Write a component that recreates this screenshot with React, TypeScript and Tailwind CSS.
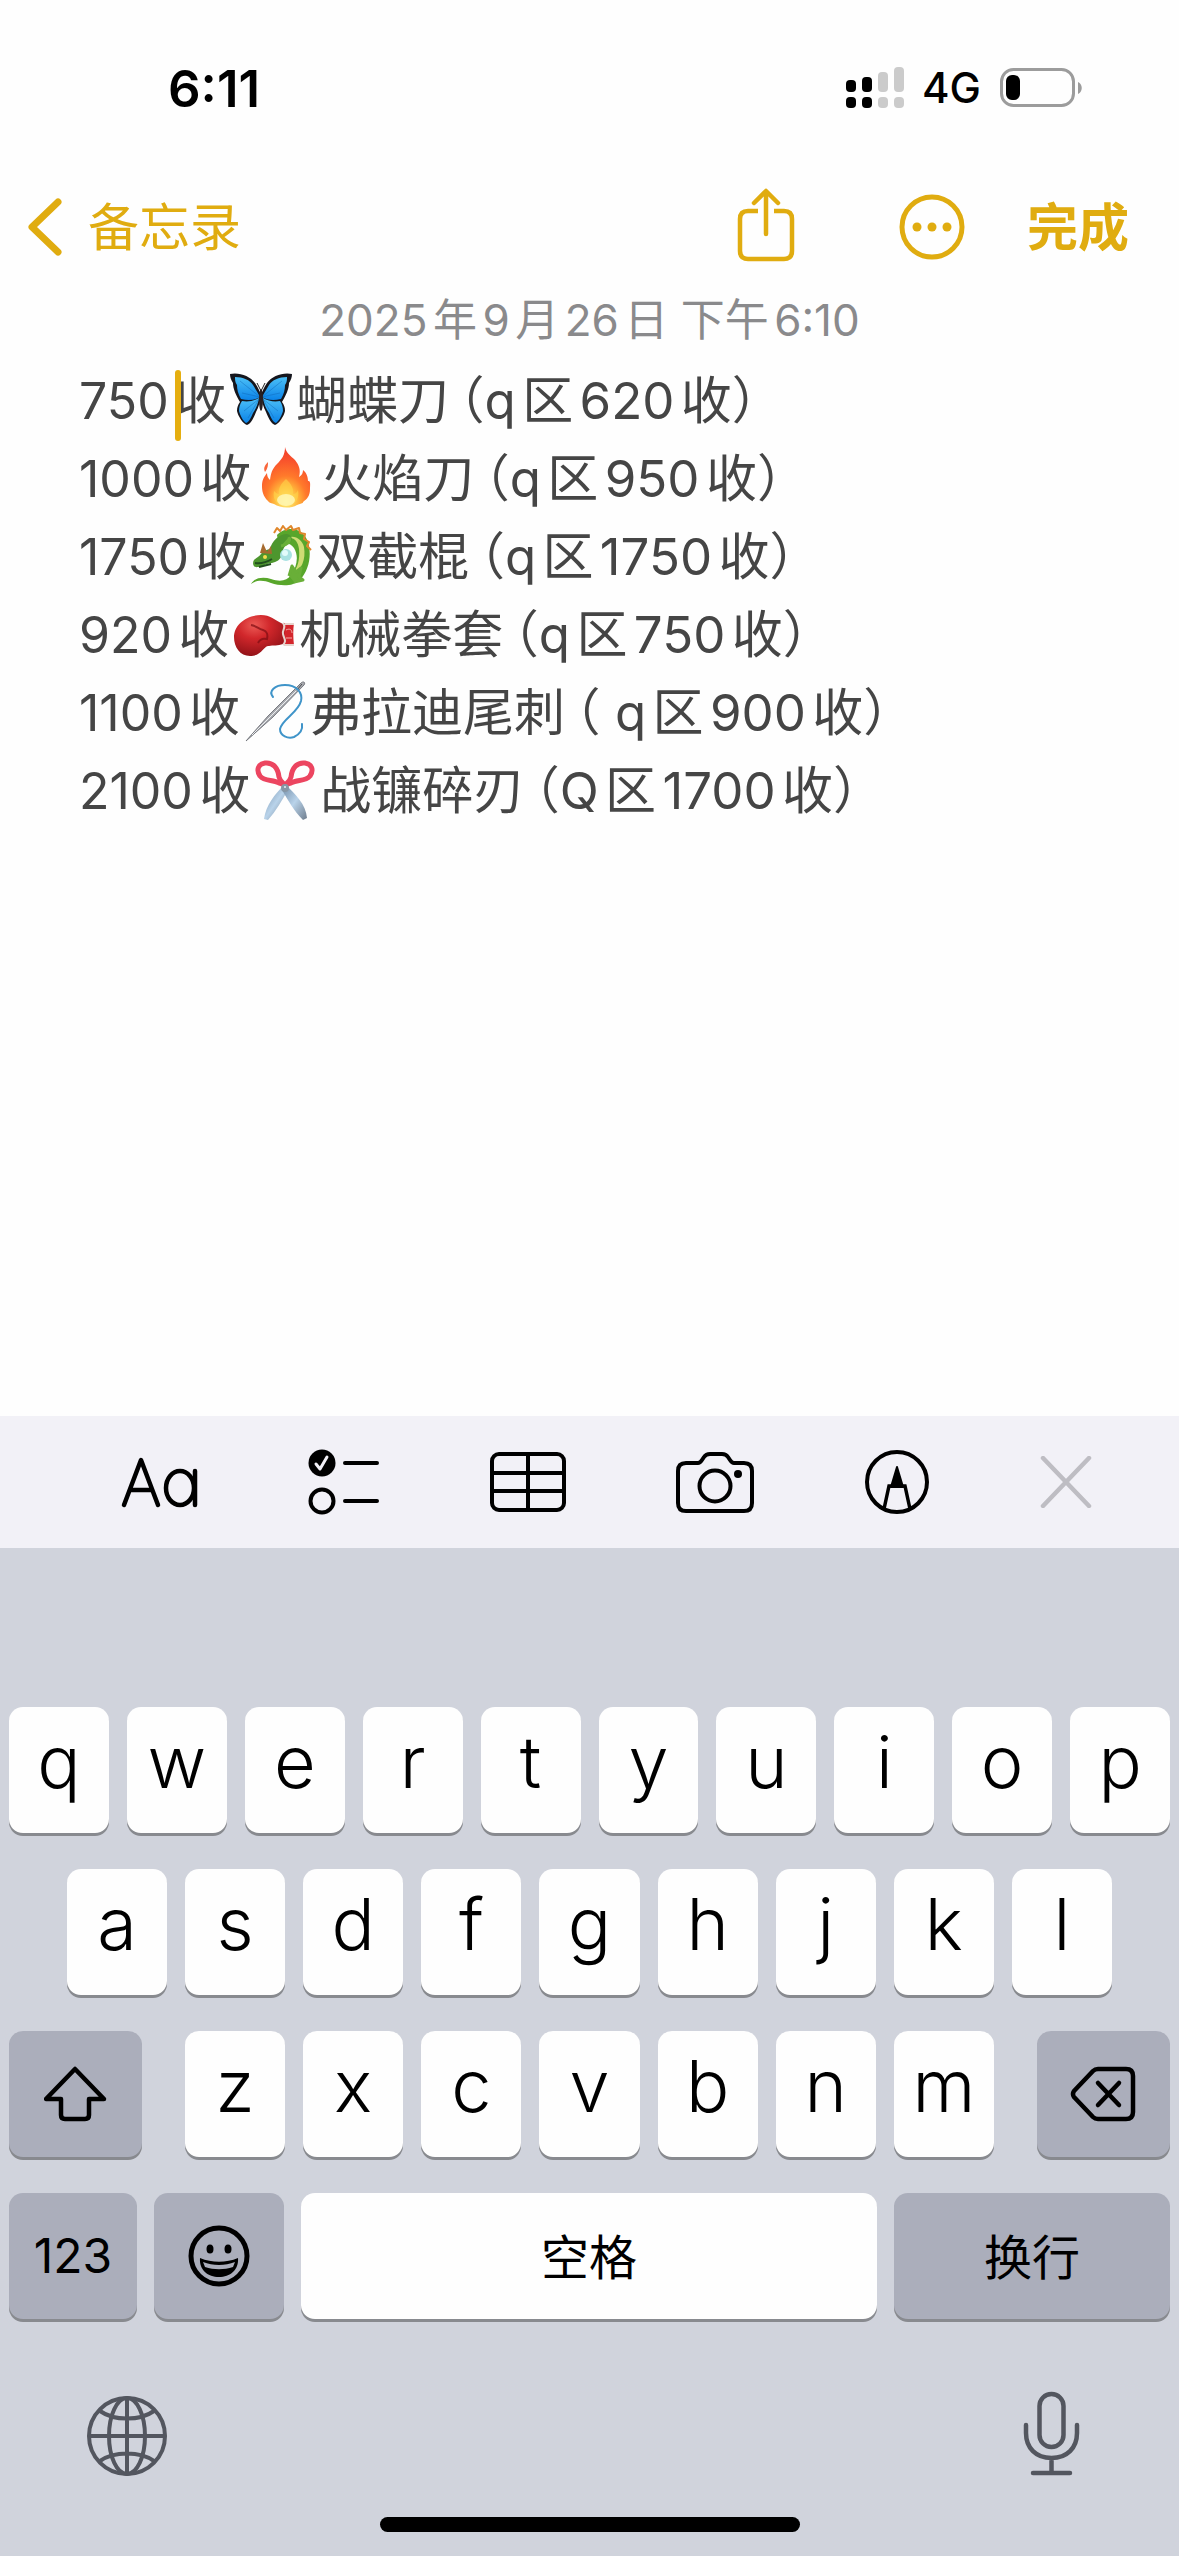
import React from 'react';

const Butterfly = () => (
    <>
        <defs>
            <linearGradient id="wing" x1="0" y1="0" x2="0" y2="1">
                <stop offset="0" stopColor="#4cc0f7" />
                <stop offset="1" stopColor="#0b83e8" />
            </linearGradient>
        </defs>
        {['', 'translate(62 0) scale(-1 1)'].map((t) => (
            <g key={t} transform={t}>
                <path d="M0 5c9-2 20 2 25 9 3 4 5 9 6 12-1 6-2 12-5 17-2 5-5 12-9 13-4-1-9-9-10-14 0-4 1-6 3-9C6 26 3 20 3 14 1 11 0 8 0 5Z" fill="#15161d" />
                <path d="M5 8c8 0 15 3 18 8 3 5 5 8 7 12-5 3-11 4-19 2C8 25 7 20 7 16 5 13 5 11 5 8Z" fill="url(#wing)" />
                <path d="M12 32c6 1 12 0 17-3-1 6-3 11-6 15-2 5-4 9-7 10-3-2-6-8-7-12 0-4 1-7 3-10Z" fill="url(#wing)" />
                <path d="M30 28 10 12M30 28 12 24M29 30 14 42M29 30 18 49" stroke="#0c5fae" strokeWidth="1" opacity="0.4" />
            </g>
        ))}
        <path d="m31 22-4-8m4 8 4-8" stroke="#222" strokeWidth="1" />
        <ellipse cx="31" cy="31" rx="2" ry="11" fill="#2a2122" />
    </>
);

const Fire = () => (
    <>
        <defs>
            <radialGradient id="flame" cx="0.5" cy="0.9" r="0.85">
                <stop offset="0" stopColor="#fff27a" />
                <stop offset="0.3" stopColor="#ffb43a" />
                <stop offset="0.5" stopColor="#ff7a2b" />
                <stop offset="0.8" stopColor="#f9532c" />
                <stop offset="1" stopColor="#f2402a" />
            </radialGradient>
        </defs>
        <path d="M30 0c1 6 6 9 10 13 4 5 6 10 4 17 3-2 4-4 4-7 4 3 5 8 5 11 3-1 2 5 2 8 0 7-3 10-7 13 1 1-4 2-6 3-7 4-17 3-23-1-2-1-5-1-6-3-5-5-6-10-6-15 0-6 2-9 5-13 0 3 1 5 3 7 1-7 2-11 7-16 5-5 8-9 8-17Z" fill="url(#flame)" />
        <path d="M13 15c0 3 0 6-3 10-2-4 0-7 3-10Z" fill="#f9653a" />
        <path d="M31 32c5 5 8 9 7 15 3 0 4-2 5-4 2 10-4 16-12 16S17 53 19 44c2 2 3 3 5 3-1-6 2-10 7-15Z" fill="#ffd84c" opacity="0.55" />
        <ellipse cx="31" cy="53" rx="9" ry="6" fill="#fffbc4" opacity="0.75" />
    </>
);

const Dragon = () => (
    <>
        <path d="M27 10C35 1 53 1 58 17c4 13 1 28-8 38-7 7-20 6-29 3-8-3-14-3-20 1 4-7 13-7 20-5 9 3 16 2 20-4 6-8 8-19 3-27-5-7-12-5-15 0Z" fill="#58a62b" />
        <path d="M34 15c8-5 14 0 15 9 1 10-1 20-8 26 11-4 15-16 13-28-2-9-12-14-20-7Z" fill="#cfdc74" />
        <path d="M24 8 27 3l3 3 3-5 3 4 5-4 2 4 6-2 1 5 5 1-1 5 5 3-2 4 4 4" fill="none" stroke="#e0872b" strokeWidth="2" strokeLinejoin="round" />
        <path d="M20 24c2-8 9-15 17-15 5 1 6 5 3 9-5 2-7 5-8 11-1 6-6 8-10 9-6 0-9 4-14 4-5 1-6-4-4-7 3-3 5-3 7-6 2-3 5-4 9-5Z" fill="#4d962e" />
        <path d="M10 28 13 18l4 9 4-6 1 8" fill="#a66b2f" />
        <path d="M5 38c6 1 12-1 17-4M9 42l12-3" stroke="#214f1d" strokeWidth="2" fill="none" />
        <circle cx="15" cy="32" r="2" fill="#f5dc4c" />
        <path d="M31 21c6-1 10-4 8-9M39 51l3-10 4 6 5-4-2 9 4 3-9 2" stroke="#69af38" strokeWidth="3" fill="#69af38" strokeLinejoin="round" />
        <circle cx="36" cy="30" r="6" fill="#a9e2e2" />
        <circle cx="35" cy="28" r="3" fill="#e2fbfa" />
    </>
);

const Glove = () => (
    <>
        <defs>
            <radialGradient id="glove" cx="0.4" cy="0.25" r="0.8">
                <stop offset="0" stopColor="#ec5a55" />
                <stop offset="0.4" stopColor="#d1272b" />
                <stop offset="1" stopColor="#8c1016" />
            </radialGradient>
        </defs>
        <path d="M51 20h10c-1 7-1 14 0 22H50Z" fill="#d4262c" />
        <path d="M1 34c0-12 12-22 27-22 9 0 14 5 22 9 2 6 2 14 0 20-5 2-10 1-14 2-5-1-7 10-19 10C7 53 1 44 1 34Z" fill="url(#glove)" />
        <path d="M18 22c6 1 7 4 12 5 4 1 5 5 4 9-4-1-7 0-9 4" stroke="#7c0d12" strokeWidth="2" fill="none" opacity="0.7" />
        <path d="M50 20c4 4-1 6 0 11s4 7 0 11M52 21h9M51 42h10" stroke="#e6d3cd" strokeWidth="2" fill="none" />
        <path d="M53 27c4-2 6 0 6 3M53 35h6" stroke="#f5aaa6" strokeWidth="1" fill="none" />
    </>
);

const Needle = () => (
    <>
        <path d="m2 60 22-25L57 2c2-2 5-1 3 2L29 36Z" fill="#a9abb0" stroke="#77797f" strokeWidth="1" />
        <path d="m8 54 44-44" stroke="#eceef0" strokeWidth="1" />
        <path d="m53 9 5-6" stroke="#4a4b50" strokeWidth="1" />
        <path d="M29 16c-5-6 2-12 12-12 11 0 18 7 16 16-3 12-19 18-21 28 0 7 8 10 14 8 6-3 9-7 8-13" fill="none" stroke="#3f94c9" strokeWidth="2" strokeLinecap="round" />
    </>
);

const Scissors = () => (
    <>
        <defs>
            <linearGradient id="blade" x1="0" y1="0" x2="1" y2="1">
                <stop offset="0" stopColor="#6f8aa5" />
                <stop offset="0.5" stopColor="#b9d3ea" />
                <stop offset="1" stopColor="#6e7c8c" />
            </linearGradient>
        </defs>
        <path d="M30 26c-9 9-18 20-20 34l4 1c8-9 14-20 20-30Z" fill="url(#blade)" />
        <path d="M32 26c9 9 20 19 21 33l-4 2c-9-9-15-20-21-30Z" fill="url(#blade)" />
        <g fill="none" stroke="#ec4560" strokeWidth="5">
            <path d="M31 26c-3-3-5-4-6-8C24 9 19 3 11 4 4 5 2 11 6 17c5 6 13 3 19 7Z" />
            <path d="M31 26c3-3 5-4 6-8 1-9 6-15 14-14 7 1 9 7 5 13-5 6-13 3-19 7Z" />
        </g>
        <circle cx="31" cy="29" r="4" fill="#8797a6" />
        <circle cx="31" cy="28" r="1" fill="#e7eef4" />
    </>
);

const NOTES = [
    { price: '750', Icon: Butterfly, emoji: '🦋', name: '蝴蝶刀', zone: 'q区620收', caret: true },
    { price: '1000', Icon: Fire, emoji: '🔥', name: '火焰刀', zone: 'q区950收' },
    { price: '1750', Icon: Dragon, emoji: '🐉', name: '双截棍', zone: 'q区1750收' },
    { price: '920', Icon: Glove, emoji: '🥊', name: '机械拳套', zone: 'q区750收' },
    { price: '1100', Icon: Needle, emoji: '🪡', name: '弗拉迪尾刺', zone: ' q区900收' },
    { price: '2100', Icon: Scissors, emoji: '✂️', name: '战镰碎刃', zone: 'Q区1700收' },
];

const StatusBar = () => (
    <div className="flex h-[176px] items-center justify-between pl-[168px] pr-24 text-black">
        <span className="text-[51px] font-semibold leading-none">6:11</span>
        <div className="flex items-center gap-[18px]">
            <svg width="58" height="42" viewBox="0 0 58 42" aria-label="信号">
                <g fill="#000">
                    <rect x="0" y="13" width="10" height="12" rx="4" />
                    <rect x="16" y="10" width="10" height="15" rx="4" />
                    <rect x="0" y="30" width="10" height="11" rx="4" />
                    <rect x="16" y="30" width="10" height="11" rx="4" />
                </g>
                <g fill="#cbcbcb">
                    <rect x="32" y="5" width="10" height="20" rx="4" />
                    <rect x="48" y="0" width="10" height="25" rx="4" />
                    <rect x="32" y="30" width="10" height="11" rx="4" />
                    <rect x="48" y="30" width="10" height="11" rx="4" />
                </g>
            </svg>
            <span className="text-[42px] font-medium leading-none">4G</span>
            <svg width="84" height="40" viewBox="0 0 84 40" aria-label="电池">
                <rect x="2.5" y="1.5" width="72" height="36" rx="12" fill="none" stroke="#9c9c9c" strokeWidth="3" />
                <path d="M79 14c5 2 5 10 0 12Z" fill="#9c9c9c" />
                <rect x="7" y="7" width="14" height="25" rx="6" fill="#000" />
            </svg>
        </div>
    </div>
);

const NavBar = () => (
    <header className="flex h-[102px] items-center justify-between pl-7 pr-[50px] text-[51px] leading-none text-[#e0ac10]">
        <button className="flex items-center gap-[26px]">
            <svg width="34" height="58" viewBox="0 0 34 58" fill="none" stroke="currentColor" strokeWidth="7" strokeLinecap="round" strokeLinejoin="round">
                <path d="M30 4 4 29l26 25" />
            </svg>
            <span>备忘录</span>
        </button>
        <div className="flex items-center">
            <button aria-label="共享" className="mr-[104px] pb-1">
                <svg width="58" height="74" viewBox="0 0 58 74" fill="none" stroke="currentColor" strokeWidth="4.5" strokeLinecap="round" strokeLinejoin="round">
                    <path d="M29 46V4M17 15 29 3l12 12" />
                    <path d="M21 23H11q-8 0-8 8v32q0 8 8 8h36q8 0 8-8V31q0-8-8-8H37" strokeLinecap="butt" />
                </svg>
            </button>
            <button aria-label="更多" className="mr-[62px]">
                <svg width="66" height="66" viewBox="0 0 66 66" fill="none">
                    <circle cx="33" cy="33" r="30" stroke="currentColor" strokeWidth="5" />
                    <g fill="currentColor">
                        <circle cx="18" cy="33" r="4.5" />
                        <circle cx="33" cy="33" r="4.5" />
                        <circle cx="48" cy="33" r="4.5" />
                    </g>
                </svg>
            </button>
            <button className="font-bold">完成</button>
        </div>
    </header>
);

const NoteBody = () => (
    <main className="flex-1">
        <p className="mb-1 pt-1 text-center text-[44px] leading-[76px] text-[#8a8a8c]">2025年9月26日 下午6:10</p>
        <div role="textbox" aria-label="备忘录正文" aria-multiline="true" contentEditable suppressContentEditableWarning className="px-[79px] text-[51px] leading-[78px] text-[#454545] outline-none">
            {NOTES.map(({ price, Icon, emoji, name, zone, caret }) => (
                <p key={name} className="whitespace-pre">
                    <span className="text-[50px]">{price}</span>
                    {caret && (
                        <span className="relative">
                            <span className="absolute left-0 top-0 h-[71px] w-[6px] rounded-full bg-[#e5ae10]" />
                        </span>
                    )}
                    收
                    <svg role="img" aria-label={emoji} viewBox="0 0 62 62" fill="none" className="mx-1 inline-block h-[62px] w-[62px] align-[-12px]">
                        <Icon />
                    </svg>
                    {name}
                    <span className="ml-[10px] [font-feature-settings:'halt']">（</span>
                    {zone}）
                </p>
            ))}
        </div>
    </main>
);

const Toolbar = () => (
    <div className="flex h-[132px] items-center justify-between bg-[#f2f1f7] pl-[120px] pr-[87px] text-black">
        <button aria-label="格式">
            <svg width="78" height="66" viewBox="0 0 78 66" fill="none" stroke="currentColor" strokeWidth="4.5" strokeLinecap="round" strokeLinejoin="round">
                <path d="M4 56 21 11l17 45M10 41h22" />
                <ellipse cx="60" cy="39" rx="14" ry="17" />
                <path d="M75 22v34" />
            </svg>
        </button>
        <button aria-label="核对清单">
            <svg width="72" height="66" viewBox="0 0 72 66" fill="none" stroke="currentColor" strokeWidth="4" strokeLinecap="round" strokeLinejoin="round">
                <circle cx="14" cy="14" r="13.5" fill="currentColor" stroke="none" />
                <path d="m8 15 4 5 7-12" stroke="#f2f1f7" strokeWidth="3" />
                <circle cx="14" cy="52" r="11.5" />
                <path d="M37 14h32M37 52h32" />
            </svg>
        </button>
        <button aria-label="表格">
            <svg width="76" height="62" viewBox="0 0 76 62" fill="none" stroke="currentColor" strokeWidth="4">
                <rect x="2" y="3" width="72" height="56" rx="7" />
                <path d="M38 3v56M2 22h72M2 40h72" />
            </svg>
        </button>
        <button aria-label="相机">
            <svg width="78" height="64" viewBox="0 0 78 64" fill="none" stroke="currentColor" strokeWidth="4">
                <path d="M10 13h12q2 0 4-3l2-3q2-3 6-3h12q4 0 6 3l2 3q2 3 4 3h10q8 0 8 8v32q0 8-8 8H10q-8 0-8-8V21q0-8 8-8Z" />
                <circle cx="39" cy="36" r="15.5" />
                <circle cx="62" cy="24" r="4" fill="currentColor" stroke="none" />
            </svg>
        </button>
        <button aria-label="标记">
            <svg width="66" height="66" viewBox="0 0 66 66" fill="none" stroke="currentColor" strokeWidth="4">
                <circle cx="33" cy="33" r="30" />
                <path d="m20 60 5-23h16l5 23" strokeWidth="3.5" />
                <path d="m33 18 6 20H27Z" fill="currentColor" strokeWidth="2" strokeLinejoin="round" />
            </svg>
        </button>
        <button aria-label="关闭" className="text-[#bebdc3]">
            <svg width="52" height="52" viewBox="0 0 52 52" fill="none" stroke="currentColor" strokeWidth="4.5" strokeLinecap="round">
                <path d="m3 2 46 48M49 2 3 50" />
            </svg>
        </button>
    </div>
);

const KEY = 'flex h-[126px] items-center justify-center rounded-[14px] shadow-[0_3px_0_#888a8f]';
const LETTER = `${KEY} min-w-0 flex-1 bg-[#fefefe] pb-4 text-[72px] font-light leading-none`;
const GRAY = `${KEY} shrink-0 bg-[#abaebb]`;

const Letters = ({ keys }: { keys: string }) => (
    <>
        {keys.split('').map((k) => (
            <button key={k} className={LETTER}>{k}</button>
        ))}
    </>
);

const Keyboard = () => (
    <div className="bg-[#d0d3dc] pb-6 pt-[159px] text-black">
        <div className="flex flex-col gap-9">
            <div className="flex gap-[18px] px-[9px]">
                <Letters keys="qwertyuiop" />
            </div>
            <div className="flex gap-[18px] px-[67px]">
                <Letters keys="asdfghjkl" />
            </div>
            <div className="flex gap-[18px] px-[9px]">
                <button aria-label="大写" className={`${GRAY} mr-[25px] w-[133px]`}>
                    <svg width="64" height="56" viewBox="0 0 64 56" fill="none" stroke="currentColor" strokeWidth="4.5" strokeLinejoin="round">
                        <path d="M31 3 2 33h15v16q0 4 4 4h20q4 0 4-4V33h15Z" />
                    </svg>
                </button>
                <Letters keys="zxcvbnm" />
                <button aria-label="删除" className={`${GRAY} ml-[25px] w-[133px]`}>
                    <svg width="66" height="56" viewBox="0 0 66 56" fill="none" stroke="currentColor" strokeWidth="4.5" strokeLinecap="round" strokeLinejoin="round">
                        <path d="M28 3h28q7 0 7 7v36q0 7-7 7H28q-3 0-5-2L4 31q-2-3 0-6L23 5q2-2 5-2Z" />
                        <path d="m28 17 21 22M49 17 28 39" />
                    </svg>
                </button>
            </div>
            <div className="flex gap-[17px] px-[9px] text-[48px] leading-none">
                <button className={`${GRAY} w-[128px]`}>123</button>
                <button aria-label="表情符号" className={`${GRAY} w-[130px]`}>
                    <svg width="62" height="62" viewBox="0 0 62 62" fill="none">
                        <circle cx="31" cy="31" r="28" stroke="currentColor" strokeWidth="5" />
                        <ellipse cx="22" cy="24" rx="3.5" ry="4.5" fill="currentColor" />
                        <ellipse cx="40" cy="24" rx="3.5" ry="4.5" fill="currentColor" />
                        <path d="M12 33c12 5 26 5 38 0 1 12-8 19-19 19S11 45 12 33Z" fill="currentColor" />
                        <path d="M15 37c10 4 22 4 32 0l-2 5c-9 3-19 3-28 0Z" fill="#abaebb" />
                    </svg>
                </button>
                <button className={`${KEY} min-w-0 flex-1 bg-[#fefefe] pt-1`}>空格</button>
                <button className={`${GRAY} w-[276px] pt-1`}>换行</button>
            </div>
        </div>
        <div className="flex items-center justify-between pb-10 pl-[87px] pr-[99px] pt-[72px] text-[#53565f]">
            <button aria-label="切换键盘" className="pt-1">
                <svg width="80" height="80" viewBox="0 0 80 80" fill="none" stroke="currentColor" strokeWidth="4">
                    <circle cx="40" cy="40" r="38" />
                    <ellipse cx="40" cy="40" rx="18" ry="38" />
                    <path d="M40 2v76M2 40h76M13 15c14 10 40 10 54 0M13 65c14-10 40-10 54 0" />
                </svg>
            </button>
            <button aria-label="听写">
                <svg width="57" height="86" viewBox="0 0 57 86" fill="none" stroke="currentColor" strokeWidth="4.5" strokeLinecap="round">
                    <rect x="16.5" y="3" width="24" height="53" rx="12" />
                    <path d="M3 34v8c0 15 10 25 25.500 25S54 57 54 42v-8M28.500 67v15M10 82h37" />
                </svg>
            </button>
        </div>
        <div className="mx-auto h-[15px] w-[420px] rounded-full bg-black" />
    </div>
);

export default function App() {
    return (
        <div lang="zh-CN" className="flex min-h-screen flex-col bg-[#fefefe] font-['Inter','Noto_Sans_CJK_SC',sans-serif] [text-autospace:normal]">
            <StatusBar />
            <NavBar />
            <NoteBody />
            <Toolbar />
            <Keyboard />
        </div>
    );
}
